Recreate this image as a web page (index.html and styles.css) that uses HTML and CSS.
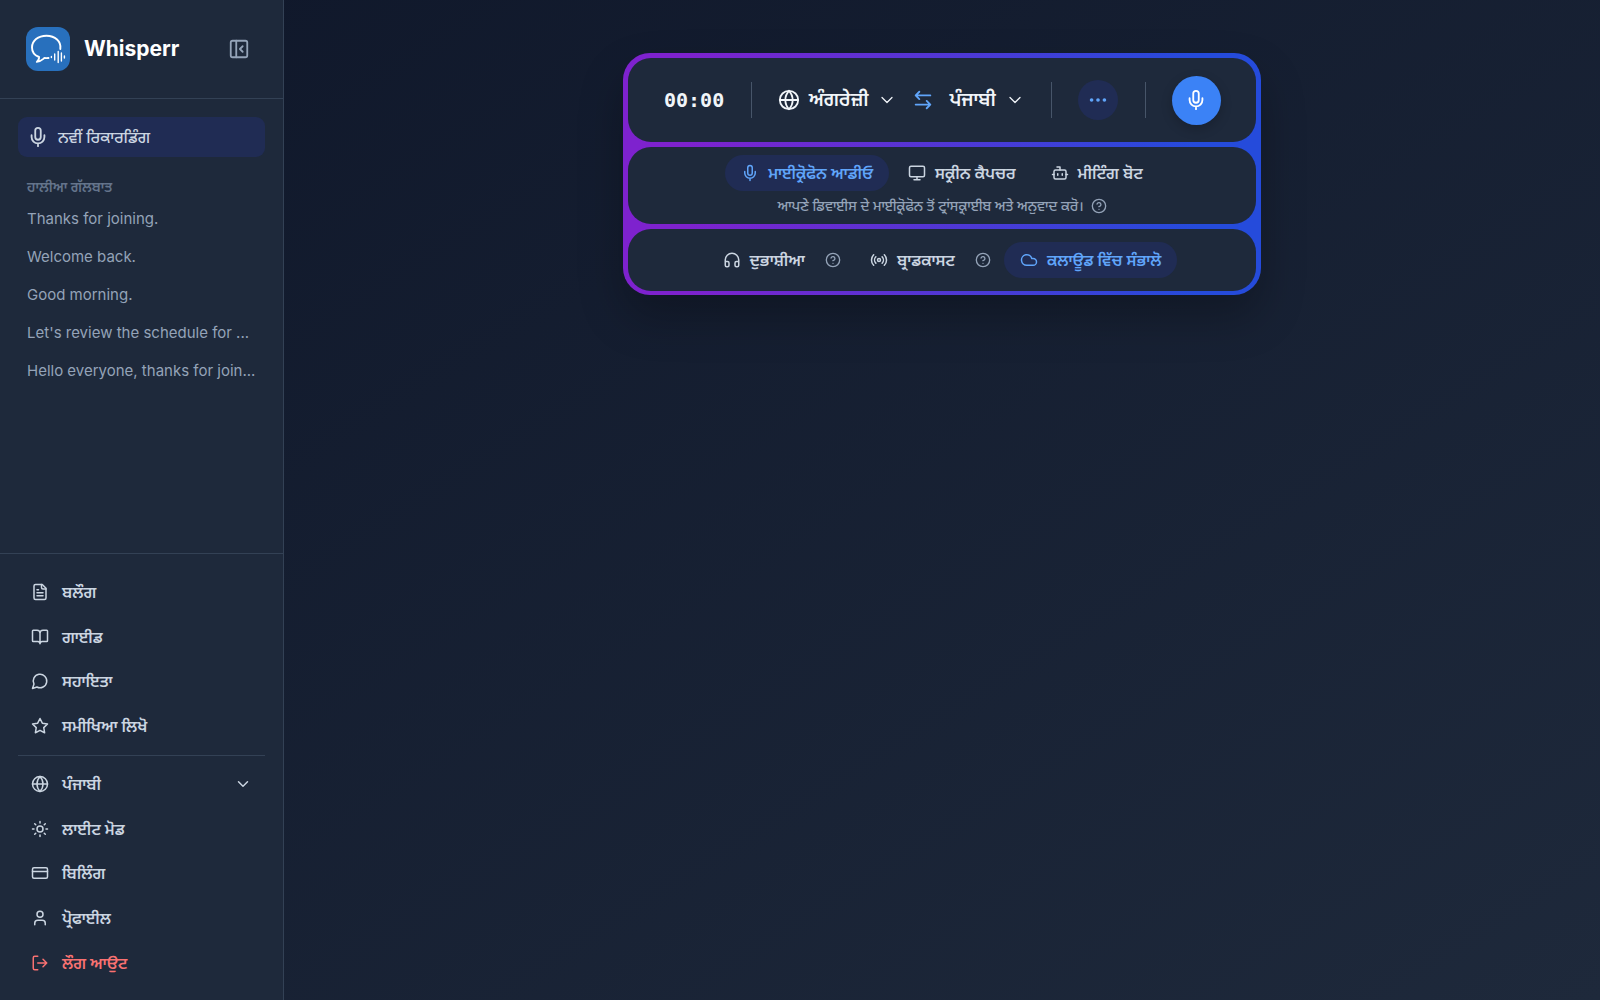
FILE: index.html
```html
<!DOCTYPE html>
<html lang="pa">
<head>
<meta charset="utf-8">
<meta name="viewport" content="width=device-width, initial-scale=1">
<title>Whisperr</title>
<link rel="stylesheet" href="styles.css">
</head>
<body>
<svg class="sprite" aria-hidden="true">
  <symbol id="mic" viewBox="0 0 24 24"><path d="M12 2a3 3 0 0 0-3 3v7a3 3 0 0 0 6 0V5a3 3 0 0 0-3-3Z"/><path d="M19 10v2a7 7 0 0 1-14 0v-2M12 19v3"/></symbol>
  <symbol id="globe" viewBox="0 0 24 24"><circle cx="12" cy="12" r="10"/><path d="M12 2a14.5 14.5 0 0 0 0 20 14.5 14.5 0 0 0 0-20M2 12h20"/></symbol>
  <symbol id="chevron" viewBox="0 0 24 24"><path d="m6 9 6 6 6-6"/></symbol>
  <symbol id="help" viewBox="0 0 24 24"><circle cx="12" cy="12" r="10"/><path d="M9.09 9a3 3 0 0 1 5.83 1c0 2-3 3-3 3M12 17h.01"/></symbol>
</svg>
<div class="app">
  <aside class="sidebar">
    <header class="brand">
      <svg class="logo" viewBox="0 0 44 44" aria-hidden="true">
        <rect width="44" height="44" rx="12" fill="#2870bd"/>
        <g fill="none" stroke="#fff" stroke-width="1.9" stroke-linecap="round" stroke-linejoin="round">
          <path d="M34.300 22C35.500 14.500 29 8.700 20.500 8.700C12 8.700 6 13.800 6 20.500C6 25 9 28.500 13 30C13.300 32 12.500 33.500 10.800 34.900C14.500 34.800 16.500 32.500 18.500 31C20 31.200 21.200 31.100 22.500 31"/>
          <path stroke-width="1.400" d="M25.400 29.500v1M28.700 27v6M32.200 24.500v11M35.400 26v8M38.400 29v2"/>
        </g>
      </svg>
      <h1 class="brand-name">Whisperr</h1>
      <button class="collapse" type="button" aria-label="Collapse sidebar">
        <svg class="icon icon-22" viewBox="0 0 24 24"><rect x="3" y="3" width="18" height="18" rx="2"/><path d="M9 3v18M16 15l-3-3 3-3"/></svg>
      </button>
    </header>
    <section class="history">
      <button class="new-recording" type="button"><svg class="icon icon-22"><use href="#mic"/></svg>ਨਵੀਂ ਰਿਕਾਰਡਿੰਗ</button>
      <h2 class="history-title">ਹਾਲੀਆ ਗੱਲਬਾਤ</h2>
      <ul class="history-list">
        <li><a href="#">Thanks for joining.</a></li>
        <li><a href="#">Welcome back.</a></li>
        <li><a href="#">Good morning.</a></li>
        <li><a href="#">Let's review the schedule for ...</a></li>
        <li><a href="#">Hello everyone, thanks for join...</a></li>
      </ul>
    </section>
    <footer class="side-footer">
      <nav class="menu menu-links">
        <a href="#"><svg class="icon icon-18" viewBox="0 0 24 24"><path d="M15 2H6a2 2 0 0 0-2 2v16a2 2 0 0 0 2 2h12a2 2 0 0 0 2-2V7Z"/><path d="M14 2v4a2 2 0 0 0 2 2h4M10 9H8M16 13H8M16 17H8"/></svg>ਬਲੌਗ</a>
        <a href="#"><svg class="icon icon-18" viewBox="0 0 24 24"><path d="M12 7v14M3 18a1 1 0 0 1-1-1V4a1 1 0 0 1 1-1h5a4 4 0 0 1 4 4 4 4 0 0 1 4-4h5a1 1 0 0 1 1 1v13a1 1 0 0 1-1 1h-6a3 3 0 0 0-3 3 3 3 0 0 0-3-3Z"/></svg>ਗਾਈਡ</a>
        <a href="#"><svg class="icon icon-18" viewBox="0 0 24 24"><path d="M7.900 20A9 9 0 1 0 4 16.100L2 22Z"/></svg>ਸਹਾਇਤਾ</a>
        <a href="#"><svg class="icon icon-18" viewBox="0 0 24 24"><path d="m12 2 3.090 6.260L22 9.270l-5 4.870 1.180 6.880L12 17.770l-6.180 3.250L7 14.140 2 9.270l6.910-1.010Z"/></svg>ਸਮੀਖਿਆ ਲਿਖੋ</a>
      </nav>
      <hr class="rule">
      <div class="menu menu-settings">
        <button type="button"><svg class="icon icon-18"><use href="#globe"/></svg>ਪੰਜਾਬੀ<svg class="icon icon-18 push"><use href="#chevron"/></svg></button>
        <button type="button"><svg class="icon icon-18" viewBox="0 0 24 24"><circle cx="12" cy="12" r="4"/><path d="M12 2v2M12 20v2M4.930 4.930l1.410 1.410M17.660 17.660l1.410 1.410M2 12h2M20 12h2M6.340 17.660l-1.410 1.410M19.070 4.930l-1.410 1.410"/></svg>ਲਾਈਟ ਮੋਡ</button>
        <a href="#"><svg class="icon icon-18" viewBox="0 0 24 24"><rect x="2" y="5" width="20" height="14" rx="2"/><path d="M2 10h20"/></svg>ਬਿਲਿੰਗ</a>
        <a href="#"><svg class="icon icon-18" viewBox="0 0 24 24"><path d="M19 21v-2a4 4 0 0 0-4-4H9a4 4 0 0 0-4 4v2"/><circle cx="12" cy="7" r="4"/></svg>ਪ੍ਰੋਫਾਈਲ</a>
        <button class="danger" type="button"><svg class="icon icon-18" viewBox="0 0 24 24"><path d="M9 21H5a2 2 0 0 1-2-2V5a2 2 0 0 1 2-2h4M16 17l5-5-5-5M21 12H9"/></svg>ਲੌਗ ਆਉਟ</button>
      </div>
    </footer>
  </aside>
  <main class="main">
    <div class="panel">
      <section class="row row-top">
        <time class="timer">00:00</time>
        <span class="sep"></span>
        <div class="languages">
          <button class="lang" type="button"><svg class="icon icon-22"><use href="#globe"/></svg>ਅੰਗਰੇਜ਼ੀ<svg class="icon icon-20 thin"><use href="#chevron"/></svg></button>
          <button class="swap" type="button" aria-label="Swap languages"><svg class="icon icon-22" viewBox="0 0 24 24"><path d="M8 3 4 7l4 4M4 7h16M16 21l4-4-4-4M20 17H4"/></svg></button>
          <button class="lang" type="button">ਪੰਜਾਬੀ<svg class="icon icon-20 thin"><use href="#chevron"/></svg></button>
        </div>
        <span class="sep"></span>
        <button class="more" type="button" aria-label="More"><svg class="icon icon-22" viewBox="0 0 24 24"><circle cx="5" cy="12" r="1"/><circle cx="12" cy="12" r="1"/><circle cx="19" cy="12" r="1"/></svg></button>
        <span class="sep"></span>
        <button class="record" type="button" aria-label="Record"><svg class="icon icon-22"><use href="#mic"/></svg></button>
      </section>
      <section class="row row-source">
        <div class="chips">
          <button class="chip active" type="button"><svg class="icon icon-18"><use href="#mic"/></svg>ਮਾਈਕ੍ਰੋਫੋਨ ਆਡੀਓ</button>
          <button class="chip" type="button"><svg class="icon icon-18" viewBox="0 0 24 24"><rect x="2" y="3" width="20" height="14" rx="2"/><path d="M8 21h8M12 17v4"/></svg>ਸਕ੍ਰੀਨ ਕੈਪਚਰ</button>
          <button class="chip" type="button"><svg class="icon icon-18" viewBox="0 0 24 24"><path d="M12 8V4H8"/><rect x="4" y="8" width="16" height="12" rx="2"/><path d="M2 14h2M20 14h2M15 13v2M9 13v2"/></svg>ਮੀਟਿੰਗ ਬੋਟ</button>
        </div>
        <p class="note">ਆਪਣੇ ਡਿਵਾਈਸ ਦੇ ਮਾਈਕ੍ਰੋਫੋਨ ਤੋਂ ਟ੍ਰਾਂਸਕ੍ਰਾਈਬ ਅਤੇ ਅਨੁਵਾਦ ਕਰੋ। <button class="help" type="button" aria-label="Help"><svg class="icon icon-16"><use href="#help"/></svg></button></p>
      </section>
      <section class="row row-options">
        <button class="chip" type="button"><svg class="icon icon-18" viewBox="0 0 24 24"><path d="M3 14h3a2 2 0 0 1 2 2v3a2 2 0 0 1-2 2H5a2 2 0 0 1-2-2v-7a9 9 0 0 1 18 0v7a2 2 0 0 1-2 2h-1a2 2 0 0 1-2-2v-3a2 2 0 0 1 2-2h3"/></svg>ਦੁਭਾਸ਼ੀਆ</button>
        <button class="help" type="button" aria-label="Help"><svg class="icon icon-16"><use href="#help"/></svg></button>
        <button class="chip" type="button"><svg class="icon icon-18" viewBox="0 0 24 24"><path d="M4.900 19.100C1 15.200 1 8.800 4.900 4.900M7.800 16.200c-2.300-2.300-2.300-6.100 0-8.500M16.200 7.800c2.300 2.300 2.300 6.100 0 8.500M19.100 4.900C23 8.800 23 15.100 19.100 19"/><circle cx="12" cy="12" r="2"/></svg>ਬ੍ਰਾਡਕਾਸਟ</button>
        <button class="help" type="button" aria-label="Help"><svg class="icon icon-16"><use href="#help"/></svg></button>
        <button class="chip active" type="button"><svg class="icon icon-18" viewBox="0 0 24 24"><path d="M17.500 19H9a7 7 0 1 1 6.710-9h1.790a4.500 4.500 0 1 1 0 9Z"/></svg>ਕਲਾਊਡ ਵਿੱਚ ਸੰਭਾਲੋ</button>
      </section>
    </div>
  </main>
</div>
</body>
</html>
```
FILE: styles.css
```css
* { box-sizing: border-box; }
body {
  margin: 0;
  font-family: Inter, "Noto Sans Gurmukhi", "Noto Sans", sans-serif;
  font-size: 16px;
  line-height: 24px;
  color: #cbd5e1;
  background: #0f172a;
}
button {
  font: inherit;
  color: inherit;
  background: none;
  border: 0;
  padding: 0;
  cursor: pointer;
}
a { color: inherit; text-decoration: none; }
.sprite { position: absolute; width: 0; height: 0; }
.icon {
  display: block;
  flex: none;
  fill: none;
  stroke: currentColor;
  stroke-width: 2;
  stroke-linecap: round;
  stroke-linejoin: round;
}
.icon-16 { width: 16px; height: 16px; }
.icon-18 { width: 18px; height: 18px; }
.icon-20 { width: 20px; height: 20px; }
.icon-22 { width: 22px; height: 22px; }
.thin { stroke-width: 1.5; }

.app {
  display: flex;
  min-height: 100vh;
  background: linear-gradient(to bottom right, #0f172a, #1e293b);
}
.sidebar {
  display: flex;
  flex-direction: column;
  flex: none;
  width: 284px;
  background: #1e293b;
  border-right: 1px solid #334155;
}
.brand {
  display: flex;
  align-items: center;
  height: 99px;
  padding: 0 33px 0 26px;
  border-bottom: 1px solid #334155;
}
.logo { width: 44px; height: 44px; }
.brand-name {
  margin: 0 auto 0 14px;
  font-size: 21px;
  line-height: 32px;
  font-weight: 700;
  color: #fff;
}
.collapse { color: #94a3b8; }

.history { flex: 1; padding: 18px; }
.new-recording {
  display: flex;
  align-items: center;
  gap: 9px;
  width: 100%;
  height: 40px;
  padding: 0 9px;
  border-radius: 9px;
  background: #202c54;
  font-weight: 500;
}
.history-title {
  margin: 19px 9px 0;
  font-size: 14px;
  line-height: 22px;
  font-weight: 600;
  color: #64748b;
}
.history-list { margin: 2px 0 0; padding: 0; list-style: none; }
.history-list a {
  display: block;
  padding: 7px 9px;
  font-size: 15px;
  white-space: nowrap;
  color: #94a3b8;
}

.side-footer { padding: 16px 18px 15px; border-top: 1px solid #334155; }
.menu { display: grid; grid-auto-rows: 1fr; }
.menu-links { height: 178px; }
.menu-settings { height: 223px; }
.menu a, .menu button {
  display: flex;
  align-items: center;
  gap: 13px;
  padding: 0 13px;
  font-weight: 600;
}
.menu .danger { color: #f87171; }
.push { margin-left: auto; }
.rule { margin: 7px 0 6px; border: 0; border-top: 1px solid #334155; }

.main { flex: 1; padding: 53px 24px; }
.panel {
  display: grid;
  gap: 5px;
  width: 100%;
  max-width: 638px;
  margin: 0 auto;
  padding: 5px 5px 4px;
  border-radius: 27px;
  background: linear-gradient(90deg, #7e22ce 10%, #254bdb 90%);
  box-shadow: 0 22px 44px rgba(0, 0, 0, 0.25);
}
.row {
  display: flex;
  align-items: center;
  justify-content: center;
  border-radius: 23px;
  background: #1e293b;
}
.row-top { justify-content: space-between; height: 84px; padding: 0 35px 0 36px; }
.timer {
  font-family: "DejaVu Sans Mono", monospace;
  font-size: 20px;
  font-weight: 700;
  color: #f1f5f9;
}
.sep { width: 1px; height: 36px; background: #475569; }
.languages { display: flex; align-items: center; gap: 15px; color: #f1f5f9; }
.lang { display: flex; align-items: center; gap: 9px; font-size: 19px; font-weight: 600; }
.swap { color: #60a5fa; }
.more, .record { display: grid; place-items: center; border-radius: 50%; }
.more { width: 40px; height: 40px; color: #60a5fa; background: #202c54; }
.record {
  width: 49px;
  height: 49px;
  color: #fff;
  background: #3b82f6;
  box-shadow: 0 4px 12px rgba(0, 0, 0, 0.2);
}
.row-source { flex-direction: column; height: 77px; }
.chips { display: flex; gap: 3px; }
.chip {
  display: flex;
  align-items: center;
  gap: 9px;
  height: 36px;
  padding: 0 16px;
  border-radius: 18px;
  font-weight: 600;
}
.chip.active { color: #60a5fa; background: #202c54; }
.note {
  display: flex;
  align-items: center;
  gap: 7px;
  margin: 4px 0 0;
  font-size: 14px;
  line-height: 22px;
  font-weight: 500;
  color: #94a3b8;
}
.help { color: #94a3b8; }
.row-options { height: 62px; }
.row-options .help { margin: 0 13px 0 4px; }
```
